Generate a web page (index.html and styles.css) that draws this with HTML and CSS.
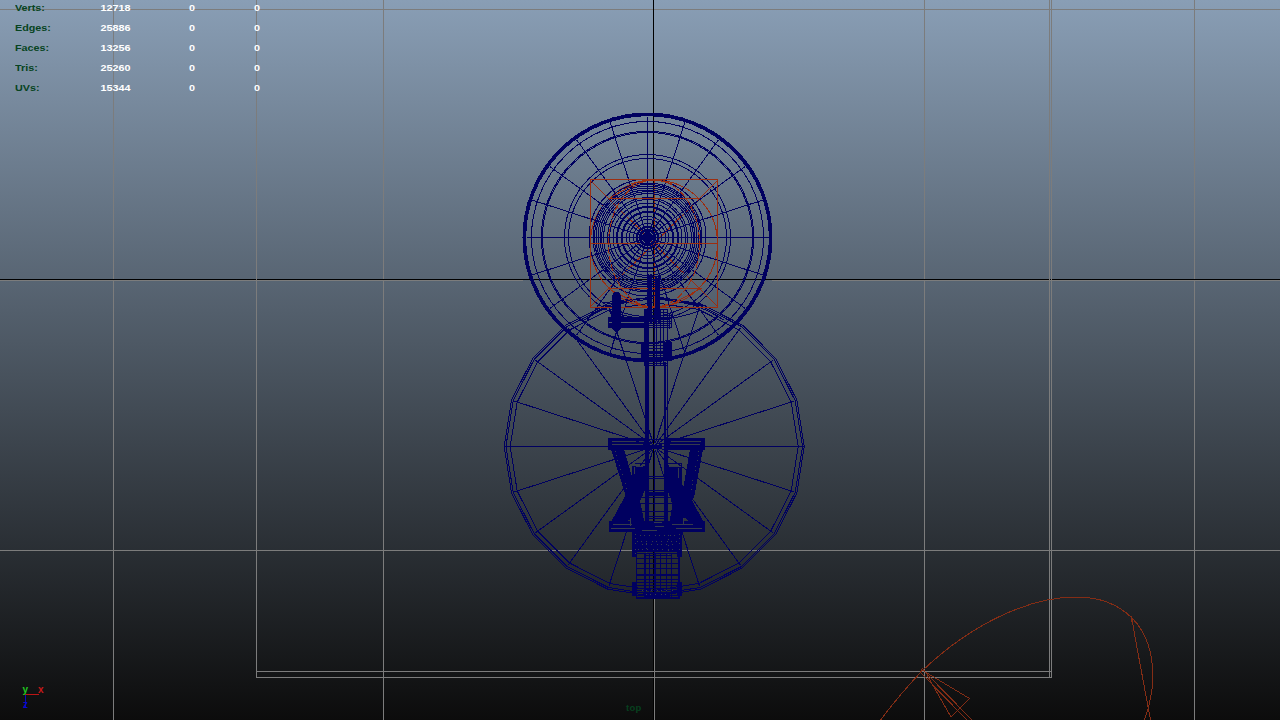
FILE: index.html
```html
<!DOCTYPE html>
<html lang="en">
<head>
<meta charset="utf-8">
<title>Viewport - top</title>
<link rel="stylesheet" href="styles.css">
</head>
<body>
<main class="viewport">
  <svg class="scene" width="1280" height="720" viewBox="0 0 1280 720" shape-rendering="crispEdges">
    <g class="grid">
      <path d="M113.5 0V720M383.5 0V720M924.5 0V720M1194.5 0V720M0 9.5H1280M0 550.5H1280M0 280.5H523M772 280.5H1280M654.5 598V720"/>
      <path class="axis" d="M0 279.5H1280M653.5 0V720"/>
      <path d="M256.5 0V677.5H1051.5V0M1049.5 0V677M256 671.5H1051"/>
    </g>
    <g class="wire" id="wheels"></g>
    <g class="curve">
      <path d="M590 180L718 307M718 180L590 307M654.5 180V307"/>
      <circle cx="654" cy="243.5" r="63.5"/>
    </g>
    <g class="wire" id="hub"></g>
    <g class="curve">
      <path d="M590 179.5H718"/>
      <path d="M590 307.5H718"/>
      <path d="M590.5 179V308"/>
      <path d="M717.5 179V308"/>
      <path d="M590 243.5H640M656 243.5H718M608 198.5H699M608 288.5H702"/>
      <ellipse cx="654" cy="243.5" rx="45.5" ry="63.5" stroke-dasharray="7 2"/>
      <path d="M608 288.5L638 304Q654 311 672 304L700 289M608 199L636 183Q654 177 672 184"/>
    </g>
    <g class="wire">
      <path d="M648.5 274V324M650.5 274V324M651.5 274V324M655.5 276V324M656.5 276V324M658.5 276V324M659.5 276V324M648 276.5H660M648 279.5H660M644.5 366V309.5H667.5V366M648 312.5H668M648 315.5H671V328"/>
      <path d="M612.500 328V296L614.500 292.500H618.500L620.500 296V328L616.500 332ZM614.500 293V331M615.500 293V331M617.500 293V331M618.500 293V331M613 296.500H620M613 299.500H620M613 328.500H620M616.500 331L610 354M616.500 331L626 360"/>
      <path class="fill" d="M608 317H645V321H608ZM608 324H645V328H608ZM612 317H621V328H612ZM612 296L614 292H619L621 296V300H612ZM612 326H621L618 331H615Z"/>
      <path class="fill" d="M612 299H614V318H612ZM615 299H618V318H615ZM619 299H621V318H619Z"/>
      <path d="M608.5 317.5H671.5V327.5H608.5ZM608 321.5H671M608 323.5H671M645 319.5H669M645 325.5H669M669.5 314V329M671.5 314V328"/>
      <path class="fill" d="M641 342H649V360H641ZM664 342H672V360H664ZM649 351H664V354H649ZM644 357H669V361H644Z"/>
      <path d="M641.5 342.5H671.5V360.5H641.5ZM649 345.5H664M649 348.5H664M649 355.5H664M645 363.5H668M645 365.5H668M656.5 324V366M660.5 310V366M663.5 310V366"/>
      <path class="fill" d="M645 310H649V540H645ZM664 362H666V440H664ZM664 440H668V540H664ZM666.5 310H668V540H666.5ZM648 276H652V320H648ZM655 278H660V320H655Z"/>
      <path class="fill" d="M608 438H645V450H608ZM666 438H705V450H666ZM645 445H662V449H645Z"/>
      <path d="M645 439.5H668M645 443.5H650M656 443.5H668M652 449L659 441M650 442L658 449"/>
      <path class="gap" d="M612 441.5H636M639 441.5H644M671 441.5H701M612 444.5H643M670 444.5H700"/>
      <path class="fill" d="M611 449H624L637 494L627 500ZM690 449H703L694 498L682 496Z"/>
      <path class="gap dots" d="M615 451L627 490M699 451L691 490"/>
      <path class="fill" d="M632 466H645V487H632ZM667 467H682V488H667Z"/>
      <path class="gap" d="M636 467V466H643M670 466H678M678.5 468V478M634.5 467V474"/>
      <path d="M634.5 463.5H645M668 463.5H681.5V478"/>
      <path class="fill" d="M643 472L647 486L639 503L627 522H611L630 487ZM668 472L691 498L704 523H690L673 505L666 486Z"/>
      <path class="fill" d="M631 484L640 500L645 526H632L623 503ZM682 484L690 500L682 526H669L673 500Z"/>
      <path class="fill" d="M645 492H668V496H645Z"/>
      <path d="M649 476.5H664M649 478.5H664M637 490.5H676M636 497.5H677M640 503.5H673M640 511.5H673M646 516.5H668M649 518.5H664"/>
      <path class="fill" d="M609 521H705V532H609Z"/>
      <path class="gap" d="M613 524.5H632M611 528.5H635M672 524.5H693M676 528.5H702M654 522.5H662M655 526.5H664M642 530.5H657M630 518V526M683 518V524"/>
      <path class="fill" d="M632 532H682V552H632ZM632 552H637V557H632ZM677 552H682V557H677Z"/>
      <path class="gap dots" d="M640 535.5H676M637 541.5H680M642 544.5H676M638 549.5H673M646 553V538M668 555V534M635 534V555M679 534V555"/>
      <path d="M636.5 553V598.5H679.5V553M644.5 553V598M645.5 553V598M649.5 553V598M655.5 553V598M660.5 553V598M666.5 553V598M671.5 553V598M678.5 553V598"/>
      <path d="M636 553.5H680M645 555.5H671M636 558.5H680M636 563.5H680M636 568.5H680M636 574.5H680M636 575.5H680M636 579.5H680M632.5 582.5H681.5V595.5H632.5ZM632 585.5H682M632 588.5H682M632 590.5H682M632 592.5H682M636 597.5H680M648 598.5H666"/>
      <path class="fill" d="M633 582H637V596H633ZM677 582H681V596H677ZM644 592H670V598H644Z"/>
      <path class="gap dots" d="M646 594.5H668M642 590.5H674"/>
    </g>
    <g class="curve dim">
      <path d="M880.5 720Q900 694 922 671C970 625 1028 597 1076 597C1101 597 1118 604 1132 618C1148 634 1153 655 1153 678Q1152 699 1144.5 720M1131.5 616L1135 637L1150.5 720M1131.5 616V622"/>
      <path d="M922 670L969.500 698.500L951 717L927 675M920 672L967 720M924 671L972 720M920.500 672L922.500 668.500L925 672"/>
    </g>
    <g class="gizmo">
      <path class="x" d="M25 694.5H39"/>
      <path class="z" d="M25.500 695V708"/>
    </g>
  </svg>
  <svg class="labels" width="50" height="34" viewBox="0 0 50 34">
    <text class="y" x="22.500" y="13">y</text>
    <text class="x" x="38" y="13">x</text>
    <text class="z" x="23" y="28">z</text>
  </svg>
  <div class="hud">
    <b>Verts:</b><span>12718</span><span>0</span><span>0</span>
    <b>Edges:</b><span>25886</span><span>0</span><span>0</span>
    <b>Faces:</b><span>13256</span><span>0</span><span>0</span>
    <b>Tris:</b><span>25260</span><span>0</span><span>0</span>
    <b>UVs:</b><span>15344</span><span>0</span><span>0</span>
  </div>
  <div class="camera">top</div>
</main>
<script src="scene.js"></script>
</body>
</html>
```

FILE: styles.css
```css
body {
  margin: 0;
  background: #0d0d0d;
}
.viewport {
  position: relative;
  width: 1280px;
  height: 720px;
  overflow: hidden;
  background: linear-gradient(#899eb5, #0c0c0c);
  font: bold 9.5px/20px "Liberation Sans", Arial, sans-serif;
}
.scene {
  position: absolute;
  inset: 0;
  fill: none;
  stroke-width: 1;
}
.grid { stroke: #7c7c7c; }
.grid .axis { stroke: #000; }
.wire { stroke: #000060; }
.wire .fill { fill: #000060; stroke: none; }
.wire .gap { stroke: #343a4c; }
.wire .dots { stroke-dasharray: 1 3 1 4 1 5; }
.curve { stroke: #9c2e10; }
.dim { stroke: #842d15; }
.gizmo .x { stroke: #bd1515; }
.gizmo .z { stroke: #0909bd; stroke-width: 1.5; }
.labels {
  position: absolute;
  left: 0;
  top: 680px;
  font-size: 10px;
}
.labels .x { fill: #c51919; }
.labels .y { fill: #20c820; }
.labels .z { fill: #0909d0; }
.hud {
  position: absolute;
  left: 15px;
  top: -2px;
  display: grid;
  grid-template-columns: 63.600px 41.400px 58.700px 59.100px;
  grid-auto-rows: 20px;
  transform: scaleX(1.1);
  transform-origin: 0 0;
  font-size: 9.8px;
  color: #fff;
}
.hud b { color: #074421; }
.hud span { text-align: right; }
.camera {
  position: absolute;
  left: 626px;
  top: 698px;
  color: #07401f;
  letter-spacing: 0.3px;
}
```

FILE: scene.js
```js
const NS = "http://www.w3.org/2000/svg";

function add(group, tag, attrs) {
  const el = document.createElementNS(NS, tag);
  for (const key in attrs) el.setAttribute(key, attrs[key]);
  document.getElementById(group).appendChild(el);
}

function point(cx, cy, r, i) {
  const a = i * Math.PI / 10;
  return (cx + r * Math.cos(a)).toFixed(1) + " " + (cy + r * Math.sin(a)).toFixed(1);
}

function polygon(group, cx, cy, r) {
  let pts = [];
  for (let i = 0; i < 20; i++) pts.push(point(cx, cy, r, i));
  add(group, "polygon", { points: pts.join(" ") });
}

function spokes(group, cx, cy, inner, outer) {
  let d = "";
  for (let i = 0; i < 20; i++) {
    d += "M" + point(cx, cy, inner, i) + "L" + point(cx, cy, outer, i);
  }
  add(group, "path", { d });
}

function ring(group, r) {
  add(group, "circle", { cx: 647.5, cy: 237.5, r });
}

for (const r of [124.5, 123.7, 122.8, 121.8, 116, 106.2, 105, 83, 79]) ring("wheels", r);
for (const r of [58.5, 54.5, 53, 51.5, 49.5, 47.5, 45.8, 44, 40, 38, 34.5, 31, 30, 26, 25, 21, 18, 14]) ring("hub", r);
spokes("hub", 647.5, 237.5, 0, 121);

for (const r of [150, 148.3, 144]) polygon("wheels", 654.2, 446.5, r);
spokes("wheels", 654.2, 446.5, 4, 147);
add("wheels", "path", { d: "M504 446.5H804M584 320Q654 276 724 320M604 303Q654 293 706 306M604 309Q654 329 702 310" });

for (const r of [11, 10, 8.5, 7.5, 6.5, 5, 4, 3, 2, 1]) ring("hub", r);
```
